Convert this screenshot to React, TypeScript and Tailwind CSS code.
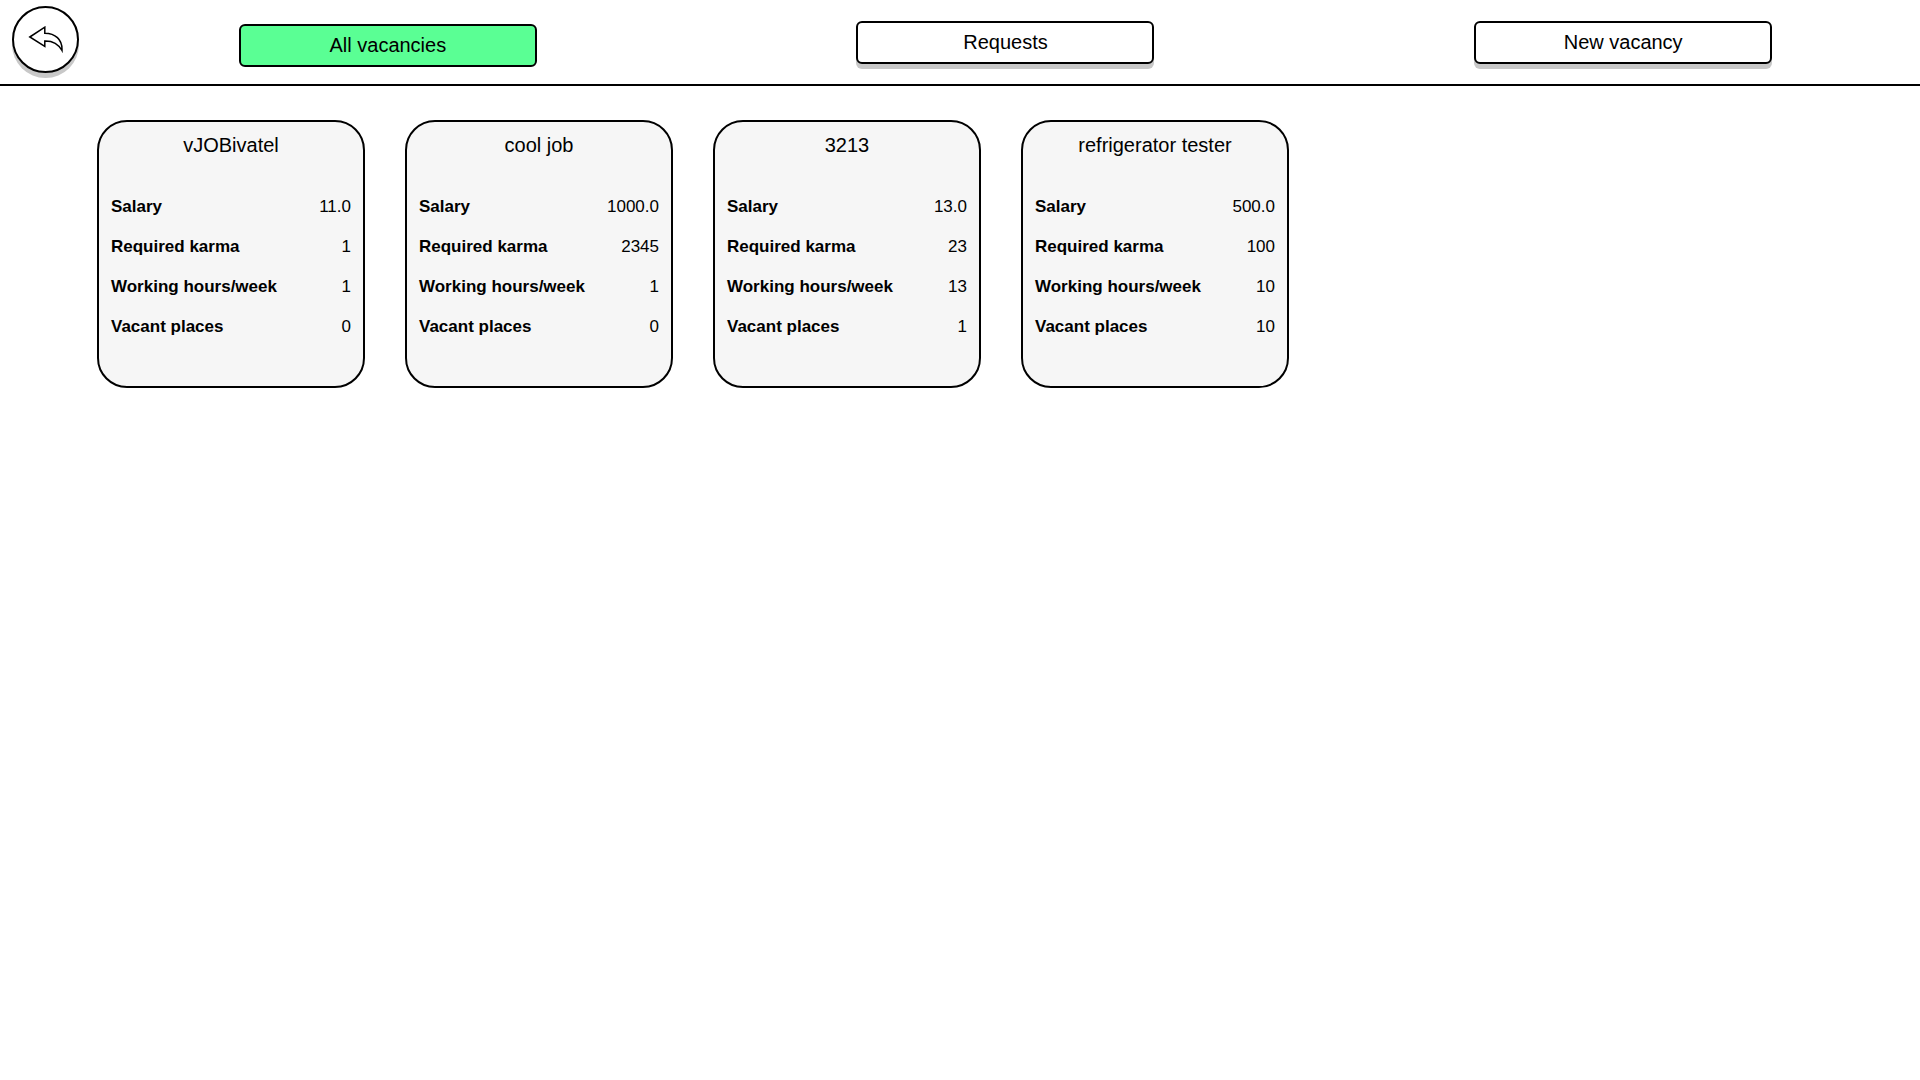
const tabs = [
  { label: "All vacancies", active: true },
  { label: "Requests", active: false },
  { label: "New vacancy", active: false },
];

const vacancies = [
  { title: "vJOBivatel", salary: "11.0", karma: "1", hours: "1", places: "0" },
  { title: "cool job", salary: "1000.0", karma: "2345", hours: "1", places: "0" },
  { title: "3213", salary: "13.0", karma: "23", hours: "13", places: "1" },
  { title: "refrigerator tester", salary: "500.0", karma: "100", hours: "10", places: "10" },
];

function BackIcon() {
  return (
    <svg width="36" height="28" viewBox="0 0 36 28" fill="none" stroke="black" strokeWidth="1.5" aria-hidden="true">
      <path d="M1.800 11 16.800 1.200V7.300C27 7.500 34.500 13 34 24.500C30.200 17.700 25 14.800 16.800 15V20.500Z" />
    </svg>
  );
}

function Row({ label, value }: { label: string; value: string }) {
  return (
    <div className="flex h-10 items-center justify-between text-[17px]">
      <dt className="font-bold">{label}</dt>
      <dd>{value}</dd>
    </div>
  );
}

export default function App() {
  return (
    <div className="min-h-screen overflow-x-hidden bg-white font-['Liberation_Sans',Arial,sans-serif] text-black">
      <header className="flex h-[86px] items-start border-b-2 border-black pl-3">
        <button
          type="button"
          aria-label="Back"
          className="mt-1.5 flex size-[67px] shrink-0 items-center justify-center rounded-full border-2 border-black bg-white shadow-[0_5px_0_#c8c8c8]"
        >
          <BackIcon />
        </button>
        <nav className="-mr-3 grid flex-1 grid-cols-3 justify-items-center">
          {tabs.map((tab) => (
            <button
              key={tab.label}
              type="button"
              className={
                tab.active
                  ? "mt-6 h-[43px] w-[298px] rounded-md border-2 border-black bg-[#5aff94] pb-0.5 text-xl"
                  : "mt-[21px] h-[43px] w-[298px] rounded-md border-2 border-black bg-white pb-0.5 text-xl shadow-[0_5px_0_#c8c8c8]"
              }
            >
              {tab.label}
            </button>
          ))}
        </nav>
      </header>
      <main className="flex flex-wrap gap-10 px-[97px] pt-[34px]">
        {vacancies.map((v) => (
          <article key={v.title} className="h-[268px] w-[268px] rounded-[30px] border-2 border-black bg-[#f6f6f6] px-3 pt-2">
            <h2 className="text-center text-xl leading-[30px]">{v.title}</h2>
            <dl className="mt-[27px]">
              <Row label="Salary" value={v.salary} />
              <Row label="Required karma" value={v.karma} />
              <Row label="Working hours/week" value={v.hours} />
              <Row label="Vacant places" value={v.places} />
            </dl>
          </article>
        ))}
      </main>
    </div>
  );
}
